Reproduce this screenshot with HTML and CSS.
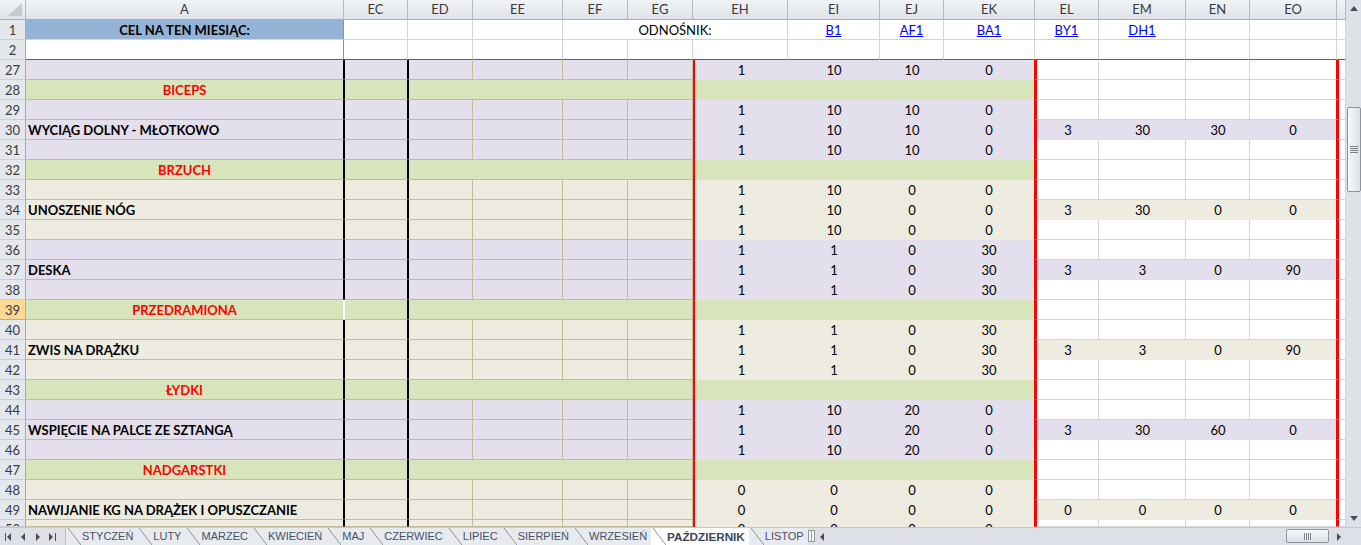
FILE: index.html
```html
<!DOCTYPE html>
<html lang="pl">
<head>
    <meta charset="UTF-8">
    <meta name="viewport" content="width=device-width, initial-scale=1.0">
    <title>Trening - PAŹDZIERNIK</title>
    <link rel="stylesheet" href="styles.css">
</head>
<body>
    <div class="main">
        <div class="sheet">
            <!-- column headers -->
            <div class="row colhead">
                <div class="corner"><svg width="22" height="18" viewBox="0 0 22 18"><polygon points="6,16 20,16 20,3" fill="#c6cbd3"/></svg></div>
                <div>A</div><div>EC</div><div>ED</div><div>EE</div><div>EF</div><div>EG</div><div>EH</div>
                <div>EI</div><div>EJ</div><div>EK</div><div>EL</div><div>EM</div><div>EN</div><div>EO</div><div></div>
            </div>

            <!-- frozen rows -->
            <div class="row top">
                <div class="rh">1</div>
                <div class="w fz goal">CEL NA TEN MIESIĄC:</div>
                <div class="w"></div><div class="w"></div><div class="w"></div>
                <div class="w span3">ODNOŚNIK:</div>
                <div class="w"><a href="#">B1</a></div>
                <div class="w"><a href="#">AF1</a></div>
                <div class="w"><a href="#">BA1</a></div>
                <div class="w"><a href="#">BY1</a></div>
                <div class="w"><a href="#">DH1</a></div>
                <div class="w"></div><div class="w"></div><div class="w"></div>
            </div>
            <div class="row top r2">
                <div class="rh">2</div>
                <div class="w fz"></div><div class="w"></div><div class="w"></div><div class="w"></div><div class="w"></div><div class="w"></div><div class="w"></div>
                <div class="w"></div><div class="w"></div><div class="w"></div><div class="w"></div><div class="w"></div><div class="w"></div><div class="w"></div><div class="w"></div>
            </div>

            <div class="row lav">
                <div class="rh">27</div>
                <div class="t ca"></div><div class="t cec"></div><div class="t ced"></div><div class="t"></div><div class="t"></div><div class="t"></div>
                <div class="v ceh">1</div><div class="v">10</div><div class="v">10</div><div class="v cek">0</div>
                <div class="w cel"></div><div class="w"></div><div class="w"></div><div class="w ceo"></div><div class="w cep"></div>
            </div>
            <div class="row grn">
                <div class="rh">28</div>
                <div class="t ca sec">BICEPS</div><div class="t cec"></div><div class="t ced span4"></div>
                <div class="v ceh cek span4"></div>
                <div class="w cel"></div><div class="w"></div><div class="w"></div><div class="w ceo"></div><div class="w cep"></div>
            </div>
            <div class="row lav">
                <div class="rh">29</div>
                <div class="t ca"></div><div class="t cec"></div><div class="t ced"></div><div class="t"></div><div class="t"></div><div class="t"></div>
                <div class="v ceh">1</div><div class="v">10</div><div class="v">10</div><div class="v cek">0</div>
                <div class="w cel"></div><div class="w"></div><div class="w"></div><div class="w ceo"></div><div class="w cep"></div>
            </div>
            <div class="row lav">
                <div class="rh">30</div>
                <div class="t ca lbl">WYCIĄG DOLNY - MŁOTKOWO</div><div class="t cec"></div><div class="t ced"></div><div class="t"></div><div class="t"></div><div class="t"></div>
                <div class="v ceh">1</div><div class="v">10</div><div class="v">10</div><div class="v cek">0</div>
                <div class="f cel">3</div><div class="f">30</div><div class="f">30</div><div class="f ceo">0</div><div class="w cep"></div>
            </div>
            <div class="row lav">
                <div class="rh">31</div>
                <div class="t ca"></div><div class="t cec"></div><div class="t ced"></div><div class="t"></div><div class="t"></div><div class="t"></div>
                <div class="v ceh">1</div><div class="v">10</div><div class="v">10</div><div class="v cek">0</div>
                <div class="w cel"></div><div class="w"></div><div class="w"></div><div class="w ceo"></div><div class="w cep"></div>
            </div>
            <div class="row grn">
                <div class="rh">32</div>
                <div class="t ca sec">BRZUCH</div><div class="t cec"></div><div class="t ced span4"></div>
                <div class="v ceh cek span4"></div>
                <div class="w cel"></div><div class="w"></div><div class="w"></div><div class="w ceo"></div><div class="w cep"></div>
            </div>
            <div class="row bei">
                <div class="rh">33</div>
                <div class="t ca"></div><div class="t cec"></div><div class="t ced"></div><div class="t"></div><div class="t"></div><div class="t"></div>
                <div class="v ceh">1</div><div class="v">10</div><div class="v">0</div><div class="v cek">0</div>
                <div class="w cel"></div><div class="w"></div><div class="w"></div><div class="w ceo"></div><div class="w cep"></div>
            </div>
            <div class="row bei">
                <div class="rh">34</div>
                <div class="t ca lbl">UNOSZENIE NÓG</div><div class="t cec"></div><div class="t ced"></div><div class="t"></div><div class="t"></div><div class="t"></div>
                <div class="v ceh">1</div><div class="v">10</div><div class="v">0</div><div class="v cek">0</div>
                <div class="f cel">3</div><div class="f">30</div><div class="f">0</div><div class="f ceo">0</div><div class="w cep"></div>
            </div>
            <div class="row bei">
                <div class="rh">35</div>
                <div class="t ca"></div><div class="t cec"></div><div class="t ced"></div><div class="t"></div><div class="t"></div><div class="t"></div>
                <div class="v ceh">1</div><div class="v">10</div><div class="v">0</div><div class="v cek">0</div>
                <div class="w cel"></div><div class="w"></div><div class="w"></div><div class="w ceo"></div><div class="w cep"></div>
            </div>
            <div class="row lav">
                <div class="rh">36</div>
                <div class="t ca"></div><div class="t cec"></div><div class="t ced"></div><div class="t"></div><div class="t"></div><div class="t"></div>
                <div class="v ceh">1</div><div class="v">1</div><div class="v">0</div><div class="v cek">30</div>
                <div class="w cel"></div><div class="w"></div><div class="w"></div><div class="w ceo"></div><div class="w cep"></div>
            </div>
            <div class="row lav">
                <div class="rh">37</div>
                <div class="t ca lbl">DESKA</div><div class="t cec"></div><div class="t ced"></div><div class="t"></div><div class="t"></div><div class="t"></div>
                <div class="v ceh">1</div><div class="v">1</div><div class="v">0</div><div class="v cek">30</div>
                <div class="f cel">3</div><div class="f">3</div><div class="f">0</div><div class="f ceo">90</div><div class="w cep"></div>
            </div>
            <div class="row lav">
                <div class="rh">38</div>
                <div class="t ca"></div><div class="t cec"></div><div class="t ced"></div><div class="t"></div><div class="t"></div><div class="t"></div>
                <div class="v ceh">1</div><div class="v">1</div><div class="v">0</div><div class="v cek">30</div>
                <div class="w cel"></div><div class="w"></div><div class="w"></div><div class="w ceo"></div><div class="w cep"></div>
            </div>
            <div class="row grn sel">
                <div class="rh">39</div>
                <div class="t ca sec">PRZEDRAMIONA</div><div class="t cec"></div><div class="t ced span4"></div>
                <div class="v ceh cek span4"></div>
                <div class="w cel"></div><div class="w"></div><div class="w"></div><div class="w ceo"></div><div class="w cep"></div>
            </div>
            <div class="row bei">
                <div class="rh">40</div>
                <div class="t ca"></div><div class="t cec"></div><div class="t ced"></div><div class="t"></div><div class="t"></div><div class="t"></div>
                <div class="v ceh">1</div><div class="v">1</div><div class="v">0</div><div class="v cek">30</div>
                <div class="w cel"></div><div class="w"></div><div class="w"></div><div class="w ceo"></div><div class="w cep"></div>
            </div>
            <div class="row bei">
                <div class="rh">41</div>
                <div class="t ca lbl">ZWIS NA DRĄŻKU</div><div class="t cec"></div><div class="t ced"></div><div class="t"></div><div class="t"></div><div class="t"></div>
                <div class="v ceh">1</div><div class="v">1</div><div class="v">0</div><div class="v cek">30</div>
                <div class="f cel">3</div><div class="f">3</div><div class="f">0</div><div class="f ceo">90</div><div class="w cep"></div>
            </div>
            <div class="row bei">
                <div class="rh">42</div>
                <div class="t ca"></div><div class="t cec"></div><div class="t ced"></div><div class="t"></div><div class="t"></div><div class="t"></div>
                <div class="v ceh">1</div><div class="v">1</div><div class="v">0</div><div class="v cek">30</div>
                <div class="w cel"></div><div class="w"></div><div class="w"></div><div class="w ceo"></div><div class="w cep"></div>
            </div>
            <div class="row grn">
                <div class="rh">43</div>
                <div class="t ca sec">ŁYDKI</div><div class="t cec"></div><div class="t ced span4"></div>
                <div class="v ceh cek span4"></div>
                <div class="w cel"></div><div class="w"></div><div class="w"></div><div class="w ceo"></div><div class="w cep"></div>
            </div>
            <div class="row lav">
                <div class="rh">44</div>
                <div class="t ca"></div><div class="t cec"></div><div class="t ced"></div><div class="t"></div><div class="t"></div><div class="t"></div>
                <div class="v ceh">1</div><div class="v">10</div><div class="v">20</div><div class="v cek">0</div>
                <div class="w cel"></div><div class="w"></div><div class="w"></div><div class="w ceo"></div><div class="w cep"></div>
            </div>
            <div class="row lav">
                <div class="rh">45</div>
                <div class="t ca lbl">WSPIĘCIE NA PALCE ZE SZTANGĄ</div><div class="t cec"></div><div class="t ced"></div><div class="t"></div><div class="t"></div><div class="t"></div>
                <div class="v ceh">1</div><div class="v">10</div><div class="v">20</div><div class="v cek">0</div>
                <div class="f cel">3</div><div class="f">30</div><div class="f">60</div><div class="f ceo">0</div><div class="w cep"></div>
            </div>
            <div class="row lav">
                <div class="rh">46</div>
                <div class="t ca"></div><div class="t cec"></div><div class="t ced"></div><div class="t"></div><div class="t"></div><div class="t"></div>
                <div class="v ceh">1</div><div class="v">10</div><div class="v">20</div><div class="v cek">0</div>
                <div class="w cel"></div><div class="w"></div><div class="w"></div><div class="w ceo"></div><div class="w cep"></div>
            </div>
            <div class="row grn">
                <div class="rh">47</div>
                <div class="t ca sec">NADGARSTKI</div><div class="t cec"></div><div class="t ced span4"></div>
                <div class="v ceh cek span4"></div>
                <div class="w cel"></div><div class="w"></div><div class="w"></div><div class="w ceo"></div><div class="w cep"></div>
            </div>
            <div class="row bei">
                <div class="rh">48</div>
                <div class="t ca"></div><div class="t cec"></div><div class="t ced"></div><div class="t"></div><div class="t"></div><div class="t"></div>
                <div class="v ceh">0</div><div class="v">0</div><div class="v">0</div><div class="v cek">0</div>
                <div class="w cel"></div><div class="w"></div><div class="w"></div><div class="w ceo"></div><div class="w cep"></div>
            </div>
            <div class="row bei">
                <div class="rh">49</div>
                <div class="t ca lbl">NAWIJANIE KG NA DRĄŻEK I OPUSZCZANIE</div><div class="t cec"></div><div class="t ced"></div><div class="t"></div><div class="t"></div><div class="t"></div>
                <div class="v ceh">0</div><div class="v">0</div><div class="v">0</div><div class="v cek">0</div>
                <div class="f cel">0</div><div class="f">0</div><div class="f">0</div><div class="f ceo">0</div><div class="w cep"></div>
            </div>
            <div class="row bei last">
                <div class="rh">50</div>
                <div class="t ca"></div><div class="t cec"></div><div class="t ced"></div><div class="t"></div><div class="t"></div><div class="t"></div>
                <div class="v ceh">0</div><div class="v">0</div><div class="v">0</div><div class="v cek">0</div>
                <div class="w cel"></div><div class="w"></div><div class="w"></div><div class="w ceo"></div><div class="w cep"></div>
            </div>
        </div>

        <div class="vscroll">
            <div class="sbtn"><svg width="8" height="5" viewBox="0 0 8 5"><polygon points="0,5 8,5 4,0" fill="#4a4f57"/></svg></div>
            <div class="vtrack">
                <div class="vthumb"><span class="grip"></span></div>
            </div>
            <div class="sbtn"><svg width="8" height="5" viewBox="0 0 8 5"><polygon points="0,0 8,0 4,5" fill="#4a4f57"/></svg></div>
        </div>
    </div>

    <div class="tabbar">
        <div class="nav">
            <svg width="7" height="8" viewBox="0 0 7 8"><rect x="0" y="0" width="1" height="8" fill="#4a4f57"/><polygon points="6,0 6,8 2,4" fill="#4a4f57"/></svg>
            <svg width="5" height="8" viewBox="0 0 5 8"><polygon points="4,0 4,8 0,4" fill="#4a4f57"/></svg>
            <svg width="5" height="8" viewBox="0 0 5 8"><polygon points="1,0 1,8 5,4" fill="#4a4f57"/></svg>
            <svg width="7" height="8" viewBox="0 0 7 8"><polygon points="0,0 0,8 4,4" fill="#4a4f57"/><rect x="6" y="0" width="1" height="8" fill="#4a4f57"/></svg>
        </div>
        <div class="tabs">
            <span class="tab">STYCZEŃ</span>
            <span class="tab">LUTY</span>
            <span class="tab">MARZEC</span>
            <span class="tab">KWIECIEŃ</span>
            <span class="tab">MAJ</span>
            <span class="tab">CZERWIEC</span>
            <span class="tab">LIPIEC</span>
            <span class="tab">SIERPIEŃ</span>
            <span class="tab">WRZESIEŃ</span>
            <span class="tab active">PAŹDZIERNIK</span>
            <span class="tab">LISTOP</span>
        </div>
        <div class="splitter"></div>
        <div class="hbtn"><svg width="5" height="8" viewBox="0 0 5 8"><polygon points="4,0 4,8 0,4" fill="#4a4f57"/></svg></div>
        <div class="htrack"><div class="hthumb"><span class="hgrip"></span></div></div>
        <div class="hbtn"><svg width="5" height="8" viewBox="0 0 5 8"><polygon points="1,0 1,8 5,4" fill="#4a4f57"/></svg></div>
        <div class="scorner"></div>
    </div>
</body>
</html>
```

FILE: styles.css
```css
* {
    margin: 0;
    padding: 0;
    box-sizing: border-box;
}
body {
    width: 1361px;
    height: 545px;
    overflow: hidden;
    background: #ffffff;
    font-family: Lato, "Liberation Sans", sans-serif;
    font-size: 13px;
    color: #000000;
}
.main {
    display: flex;
    height: 527px;
}
.sheet {
    width: 1346px;
    height: 527px;
    overflow: hidden;
}

/* rows share one column template */
.row {
    display: grid;
    grid-template-columns: 26px 318px 64px 65px 90px 65px 65px 95px 92px 64px 91px 64px 87px 64px 87px 9px;
    height: 20px;
    line-height: 19px;
}
.row > div {
    border-right: 1px solid #d4d4d4;
    border-bottom: 1px solid #d4d4d4;
    text-align: center;
    white-space: nowrap;
    overflow: hidden;
    padding-top: 1px;
}
.row.last {
    height: 7px;
    overflow: hidden;
    line-height: 17px;
}

/* headers */
.colhead > div {
    background: linear-gradient(#f1f3f6, #dfe3e9);
    border-right-color: #b3bac4;
    border-bottom-color: #a7aeb8;
    color: #3a3a3a;
    padding-top: 0;
}
.colhead .corner {
    padding: 0;
    line-height: 0;
}
.rh {
    background: #e4e7ec;
    color: #3a3a3a;
}
.row > .rh {
    border-right-color: #a3aab4;
    border-bottom-color: #c9ced6;
}
.sel > .rh {
    background: #fbd894;
    border-right-color: #e2a93c;
    border-bottom-color: #e2a93c;
}

/* frozen top rows */
.w {
    background: #ffffff;
}
.row > .fz {
    border-right-color: #8e8e8e;
}
.goal {
    background: #95b3d7;
    font-weight: bold;
}
.span3 {
    grid-column: span 3;
}
.span4 {
    grid-column: span 4;
}
.r2 > div {
    border-bottom-color: #5f5f5f;
}
a {
    color: #0000ff;
    text-decoration: underline;
}

/* row fills */
.lav { --bg: #e4dfec; }
.bei { --bg: #eeece1; }
.grn { --bg: #d8e4bc; }

.row > .t {
    background: var(--bg);
    border-right-color: #c4bd97;
    border-bottom-color: #c4bd97;
}
.row > .v,
.row > .f {
    background: var(--bg);
    border-right: 0;
    border-bottom: 0;
}

/* heavy borders */
.row > .ca {
    border-right-color: #000000;
}
.row > .cec {
    border-left: 1px solid #000000;
    border-right-color: #000000;
}
.row > .ced {
    border-left: 1px solid #000000;
}
.sel > .ca {
    border-right-color: #ffffff;
}
.sel > .cec {
    border-left-color: #ffffff;
}
.row > .ceh,
.row > .cel,
.row > .cep {
    border-left: 2px solid #ff0000;
}
.row > .cek,
.row > .ceo {
    border-right: 1px solid #ff0000;
}

.lbl {
    text-align: left !important;
    padding-left: 2px;
    font-weight: bold;
}
.sec {
    color: #ff0000;
    font-weight: bold;
}

/* vertical scrollbar */
.vscroll {
    width: 15px;
    height: 527px;
    background: #dde1e8;
    display: flex;
    flex-direction: column;
}
.sbtn {
    height: 17px;
    display: flex;
    align-items: center;
    justify-content: center;
}
.vtrack {
    flex: 1;
    padding-top: 90px;
}
.vthumb {
    width: 14px;
    height: 85px;
    margin-left: 1px;
    border: 1px solid #8d949e;
    border-radius: 2px;
    background: linear-gradient(to right, #f7f8fa, #dce1e8);
    display: flex;
    align-items: center;
    justify-content: center;
}
.grip {
    width: 8px;
    height: 7px;
    background: repeating-linear-gradient(#7b828c 0 1px, transparent 1px 2px);
}

/* sheet tabs */
.tabbar {
    display: flex;
    height: 18px;
    background: #dde1e7;
    border-top: 1px solid #c3c9d1;
    font-family: "Liberation Sans", Arial, sans-serif;
    font-size: 11px;
    line-height: 15px;
}
.nav {
    width: 66px;
    display: flex;
    align-items: center;
    gap: 9px;
    padding-left: 5px;
    border-right: 1px solid #b5bcc6;
}
.tabs {
    width: 742px;
    display: flex;
    overflow: hidden;
}
.tab {
    position: relative;
    padding: 1px 4px 0 16px;
    color: #465165;
    background: #e7eaef;
}
.tab::before {
    content: "";
    position: absolute;
    left: 2px;
    top: 0;
    width: 13px;
    height: 17px;
    background: linear-gradient(to top right, transparent calc(50% - 0.8px), #8a94a1 50%, transparent calc(50% + 0.8px));
}
.tab.active {
    background: #ffffff;
    font-weight: bold;
    font-size: 11.7px;
    color: #3a4658;
}
.splitter {
    width: 7px;
    margin: 2px 0 3px;
    border: 1px solid #8f97a2;
    background: linear-gradient(to right, #ffffff 0 2px, #8f97a2 2px 3px, #ffffff 3px);
}
.hbtn {
    width: 15px;
    display: flex;
    align-items: center;
    justify-content: center;
}
.htrack {
    flex: 1;
    padding: 1px 0 1px 456px;
}
.hthumb {
    width: 43px;
    height: 14px;
    border: 1px solid #8d949e;
    border-radius: 2px;
    background: linear-gradient(#f7f8fa, #dce1e8);
    display: flex;
    align-items: center;
    justify-content: center;
}
.hgrip {
    width: 7px;
    height: 7px;
    background: repeating-linear-gradient(to right, #7b828c 0 1px, transparent 1px 2px);
}
.scorner {
    width: 15px;
    background: #dde1e7;
}
```
